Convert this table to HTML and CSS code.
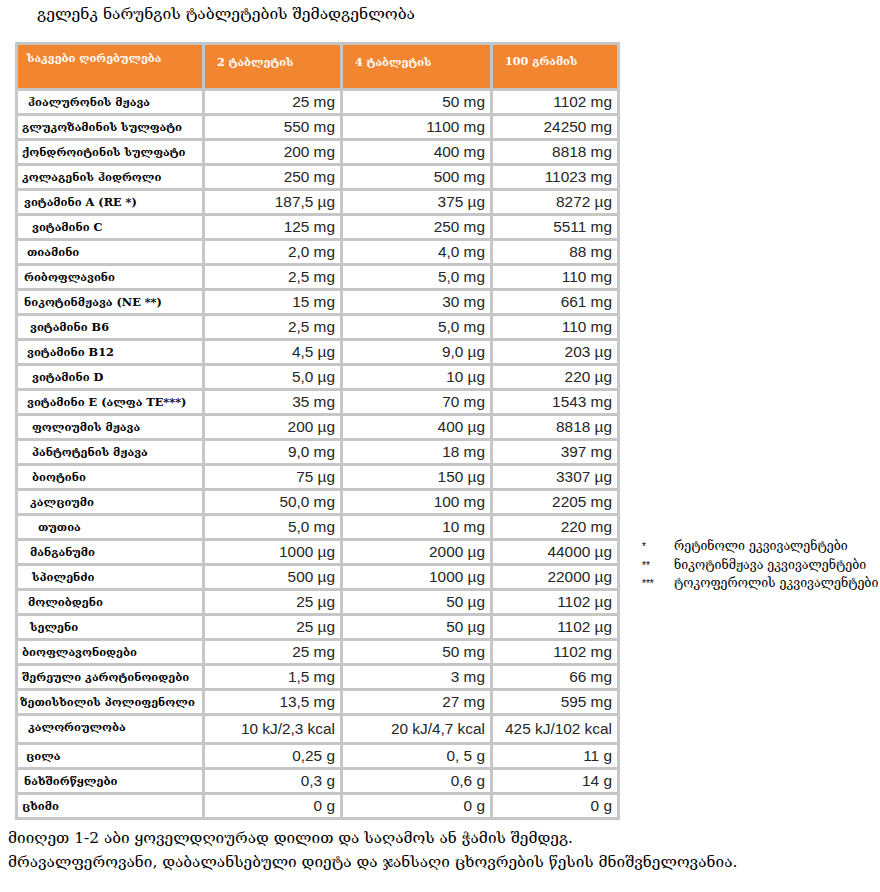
FILE: index.html
```html
<!DOCTYPE html>
<html lang="ka">
<head>
    <meta charset="UTF-8">
    <meta name="viewport" content="width=device-width, initial-scale=1.0">
    <title>გელენკ ნარუნგის ტაბლეტების შემადგენლობა</title>
    <link rel="stylesheet" href="styles.css">
</head>
<body>
    <h1 class="title">გელენკ ნარუნგის ტაბლეტების შემადგენლობა</h1>

    <div class="layout">
        <table class="facts">
            <colgroup>
                <col class="col-name">
                <col class="col-a">
                <col class="col-b">
                <col class="col-c">
            </colgroup>
            <thead>
                <tr>
                    <th class="top">საკვები ღირებულება</th>
                    <th>2 ტაბლეტის</th>
                    <th>4 ტაბლეტის</th>
                    <th class="lift">100 გრამის</th>
                </tr>
            </thead>
            <tbody>
                <tr><td class="in-10">ჰიალურონის მჟავა</td><td>25 mg</td><td>50 mg</td><td>1102 mg</td></tr>
                <tr><td class="in-4">გლუკოზამინის სულფატი</td><td>550 mg</td><td>1100 mg</td><td>24250 mg</td></tr>
                <tr><td class="in-4">ქონდროიტინის სულფატი</td><td>200 mg</td><td>400 mg</td><td>8818 mg</td></tr>
                <tr><td class="in-4">კოლაგენის ჰიდროლი</td><td>250 mg</td><td>500 mg</td><td>11023 mg</td></tr>
                <tr><td class="in-6">ვიტამინი A (RE *)</td><td>187,5 µg</td><td>375 µg</td><td>8272 µg</td></tr>
                <tr><td class="in-14">ვიტამინი C</td><td>125 mg</td><td>250 mg</td><td>5511 mg</td></tr>
                <tr><td class="in-9">თიამინი</td><td>2,0 mg</td><td>4,0 mg</td><td>88 mg</td></tr>
                <tr><td class="in-6">რიბოფლავინი</td><td>2,5 mg</td><td>5,0 mg</td><td>110 mg</td></tr>
                <tr><td class="in-6">ნიკოტინმჟავა (NE **)</td><td>15 mg</td><td>30 mg</td><td>661 mg</td></tr>
                <tr><td class="in-12">ვიტამინი B6</td><td>2,5 mg</td><td>5,0 mg</td><td>110 mg</td></tr>
                <tr><td class="in-9">ვიტამინი B12</td><td>4,5 µg</td><td>9,0 µg</td><td>203 µg</td></tr>
                <tr><td class="in-14">ვიტამინი D</td><td>5,0 µg</td><td>10 µg</td><td>220 µg</td></tr>
                <tr><td class="in-9">ვიტამინი E (ალფა TE***)</td><td>35 mg</td><td>70 mg</td><td>1543 mg</td></tr>
                <tr><td class="in-14">ფოლიუმის მჟავა</td><td>200 µg</td><td>400 µg</td><td>8818 µg</td></tr>
                <tr><td class="in-14">პანტოტენის მჟავა</td><td>9,0 mg</td><td>18 mg</td><td>397 mg</td></tr>
                <tr><td class="in-14">ბიოტინი</td><td>75 µg</td><td>150 µg</td><td>3307 µg</td></tr>
                <tr><td class="in-12">კალციუმი</td><td>50,0 mg</td><td>100 mg</td><td>2205 mg</td></tr>
                <tr><td class="in-20">თუთია</td><td>5,0 mg</td><td>10 mg</td><td>220 mg</td></tr>
                <tr><td class="in-12">მანგანუმი</td><td>1000 µg</td><td>2000 µg</td><td>44000 µg</td></tr>
                <tr><td class="in-14">სპილენძი</td><td>500 µg</td><td>1000 µg</td><td>22000 µg</td></tr>
                <tr><td class="in-10">მოლიბდენი</td><td>25 µg</td><td>50 µg</td><td>1102 µg</td></tr>
                <tr><td class="in-12">სელენი</td><td>25 µg</td><td>50 µg</td><td>1102 µg</td></tr>
                <tr><td class="in-4">ბიოფლავონიდები</td><td>25 mg</td><td>50 mg</td><td>1102 mg</td></tr>
                <tr><td class="in-4">შერეული კაროტინოიდები</td><td>1,5 mg</td><td>3 mg</td><td>66 mg</td></tr>
                <tr><td class="in-2">ზეთისხილის პოლიფენოლი</td><td>13,5 mg</td><td>27 mg</td><td>595 mg</td></tr>
                <tr class="tall"><td class="in-10 top">კალორიულობა</td><td>10 kJ/2,3 kcal</td><td>20 kJ/4,7 kcal</td><td>425 kJ/102 kcal</td></tr>
                <tr><td class="in-8">ცილა</td><td>0,25 g</td><td>0, 5 g</td><td>11 g</td></tr>
                <tr><td class="in-6">ნახშირწყლები</td><td>0,3 g</td><td>0,6 g</td><td>14 g</td></tr>
                <tr><td class="in-4">ცხიმი</td><td>0 g</td><td>0 g</td><td>0 g</td></tr>
            </tbody>
        </table>

        <ul class="notes">
            <li><span class="mark">*</span>რეტინოლი ეკვივალენტები</li>
            <li><span class="mark">**</span>ნიკოტინმჟავა ეკვივალენტები</li>
            <li><span class="mark">***</span>ტოკოფეროლის ეკვივალენტები</li>
        </ul>
    </div>

    <p class="usage">მიიღეთ 1-2 აბი ყოველდღიურად დილით და საღამოს ან ჭამის შემდეგ.</p>
    <p class="usage">მრავალფეროვანი, დაბალანსებული დიეტა და ჯანსაღი ცხოვრების წესის მნიშვნელოვანია.</p>
</body>
</html>
```

FILE: styles.css
```css
:root {
    --orange: #f28530;
    --grid: #c6c6c6;
    --num-color: #262626;
    --geo-font: "DejaVu Serif", "DejaVu Sans", serif;
}

body {
    margin: 0;
    padding: 0 0 0 8px;
    background: #ffffff;
    color: #000000;
    font-family: var(--geo-font);
}

.title {
    margin: 0;
    padding: 4px 0 0 29px;
    height: 38px;
    font-size: 15.6px;
    font-weight: normal;
    line-height: 20px;
}

.layout {
    display: flex;
    align-items: flex-start;
}

.facts {
    margin-left: 7px;
    width: 605px;
    table-layout: fixed;
    border-collapse: collapse;
    border: 3px solid var(--grid);
}

.col-name { width: 187px; }
.col-a { width: 138px; }
.col-b { width: 150px; }
.col-c { width: 127px; }

.facts th,
.facts td {
    border: 3px solid var(--grid);
}

/* header row: 43px of content + padding in every cell */
.facts th {
    height: 34px;
    padding: 0 0 9px 12px;
    background: var(--orange);
    color: #ffffff;
    font-size: 11.2px;
    font-weight: bold;
    text-align: left;
    vertical-align: middle;
}

.facts th.top {
    height: 37px;
    vertical-align: top;
    padding: 6px 0 0 9px;
}

.facts th.lift {
    height: 32px;
    padding-bottom: 11px;
}

.facts td {
    height: 22px;
    padding: 0 5px 0 0;
    font-family: "Liberation Sans", Arial, sans-serif;
    font-size: 15.4px;
    color: var(--num-color);
    text-align: right;
    vertical-align: middle;
    line-height: 18px;
}

.facts td:first-child {
    font-family: var(--geo-font);
    font-size: 11.3px;
    font-weight: bold;
    color: #000000;
    text-align: left;
    white-space: nowrap;
}

.facts td.top {
    vertical-align: top;
    padding-top: 2px;
}

.facts .tall td {
    height: 24px;
}

.in-2 { padding-left: 2px !important; }
.in-4 { padding-left: 4px !important; }
.in-6 { padding-left: 6px !important; }
.in-8 { padding-left: 8px !important; }
.in-9 { padding-left: 9px !important; }
.in-10 { padding-left: 10px !important; }
.in-12 { padding-left: 12px !important; }
.in-14 { padding-left: 14px !important; }
.in-20 { padding-left: 20px !important; }

.notes {
    list-style: none;
    margin: 495px 0 0 0;
    padding: 0 0 0 22px;
    font-size: 12.4px;
    line-height: 17.5px;
    white-space: nowrap;
}

.notes li {
    display: flex;
    align-items: baseline;
}

.mark {
    width: 32px;
    flex: none;
    font-family: "Liberation Sans", Arial, sans-serif;
    font-size: 10px;
}

.usage {
    margin: 0;
    font-size: 15.4px;
    line-height: 24px;
}

.layout + .usage {
    margin-top: 6px;
}
```
